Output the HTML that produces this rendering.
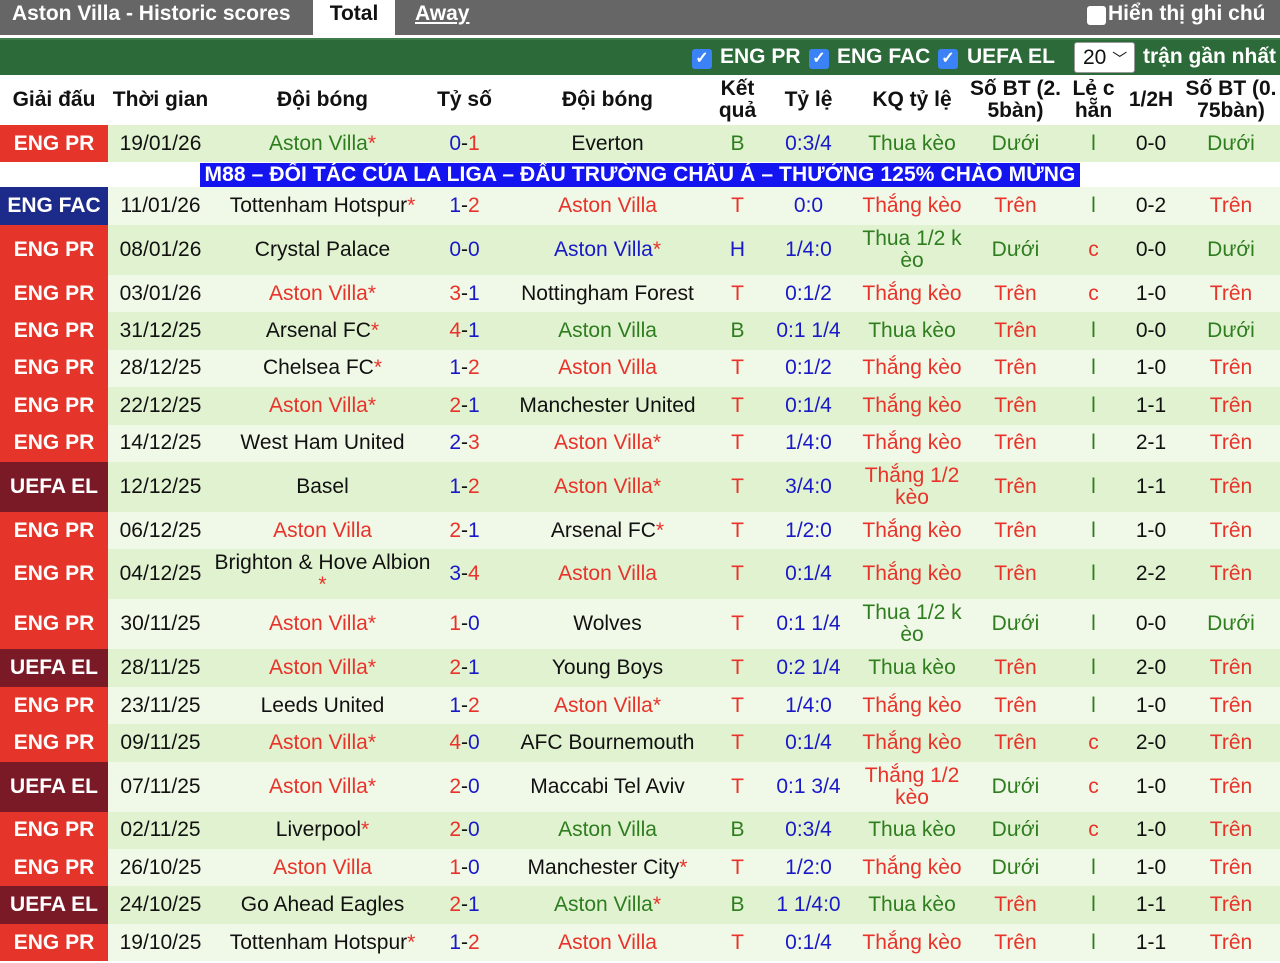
<!DOCTYPE html><html><head><meta charset="utf-8"><style>
*{margin:0;padding:0;box-sizing:border-box}
body{width:1280px;height:963px;overflow:hidden;background:#fff;font-family:"Liberation Sans",Arial,sans-serif;font-size:21px;color:#111;position:relative}
.top{position:absolute;left:0;top:0;width:1280px;height:35px;background:#666}
.top .t{position:absolute;top:2px;color:#fff;font-weight:bold;font-size:21px}
.tab{position:absolute;left:313px;top:0;width:82px;height:36px;background:#fff;color:#111;font-weight:bold;text-align:center;line-height:28px;font-size:21px}
.cb{position:absolute;width:19px;height:19px;border-radius:3px}
.bar{position:absolute;left:0;top:38px;width:1280px;height:37px;background:#2d6a3a;border-top:2px solid #3d7d49}
.bar span{position:absolute;top:5px;color:#fff;font-weight:bold;font-size:21px}
.bar .c{position:absolute;top:9px;width:20px;height:20px;background:#3b82f6;border-radius:3px;color:#fff;font-size:16px;line-height:20px;text-align:center;font-weight:bold}
.sel{position:absolute;left:1074px;top:42px;width:61px;height:31px;background:#fff;border:1px solid #999;border-radius:3px;font-size:21px;color:#111;padding-left:8px;line-height:29px}
table{position:absolute;left:0;top:75px;width:1280px;border-collapse:collapse;table-layout:fixed}
td,th{text-align:center;padding:0;line-height:22px;overflow:hidden;white-space:nowrap}
th{height:50px;font-weight:bold;font-size:21px}
tr.d td{background:#e1f2d0}tr.l td{background:#f0f8e7}
td{height:37.43px}
tr.tl td{height:50px}
td.L{color:#fff;font-weight:bold;font-size:21px}
.pr{background:#e5352a!important}.fa{background:#1c2b8a!important}.ue{background:#7b1a27!important}
.g{color:#2e7d1f}.r{color:#e8322a}.b{color:#1919c8}
tr.ad td{height:25px;background:#fff;line-height:0;font-size:0;text-align:left}
.adt{display:block;margin-left:200px;height:24px;background:#1414f0;color:#fff;font-weight:bold;font-size:21px;letter-spacing:0.1px;line-height:24px;width:880px;white-space:nowrap;overflow:hidden;text-align:center}
</style></head><body>
<div class="top"><div class="t" style="left:12px">Aston Villa - Historic scores</div>
<div class="tab">Total</div>
<div class="t" style="left:415px;text-decoration:underline">Away</div>
<div class="cb" style="left:1087px;top:6px;background:#fff"></div>
<div class="t" style="left:1108px">Hiển thị ghi chú</div></div>
<div class="bar">
<div class="c" style="left:692px">✓</div><span style="left:720px">ENG PR</span>
<div class="c" style="left:809px">✓</div><span style="left:837px">ENG FAC</span>
<div class="c" style="left:938px">✓</div><span style="left:967px">UEFA EL</span>
<span style="left:1143px">trận gần nhất</span></div>
<div class="sel">20 <span style="font-size:15px">﹀</span></div>
<table>
<colgroup><col style="width:108px"><col style="width:105px"><col style="width:219px"><col style="width:65px"><col style="width:221px"><col style="width:39px"><col style="width:103px"><col style="width:104px"><col style="width:103px"><col style="width:53px"><col style="width:62px"><col style="width:98px"></colgroup>
<tr><th>Giải đấu</th><th>Thời gian</th><th>Đội bóng</th><th>Tỷ số</th><th>Đội bóng</th><th>Kết<br>quả</th><th>Tỷ lệ</th><th>KQ tỷ lệ</th><th>Số BT (2.<br>5bàn)</th><th>Lẻ c<br>hẵn</th><th>1/2H</th><th>Số BT (0.<br>75bàn)</th></tr>
<tr class="d"><td class="L pr">ENG PR</td><td>19/01/26</td><td class="g">Aston Villa<span class="r">*</span></td><td><span class="b">0</span>-<span class="r">1</span></td><td>Everton</td><td class="g">B</td><td class="b">0:3/4</td><td class="g">Thua kèo</td><td class="g">Dưới</td><td class="g">l</td><td>0-0</td><td class="g">Dưới</td></tr>
<tr class="ad"><td colspan="12"><span class="adt">M88 – ĐỐI TÁC CỦA LA LIGA – ĐẤU TRƯỜNG CHÂU Á – THƯỞNG 125% CHÀO MỪNG</span></td></tr>
<tr class="l"><td class="L fa">ENG FAC</td><td>11/01/26</td><td>Tottenham Hotspur<span class="r">*</span></td><td><span class="b">1</span>-<span class="r">2</span></td><td class="r">Aston Villa</td><td class="r">T</td><td class="b">0:0</td><td class="r">Thắng kèo</td><td class="r">Trên</td><td class="g">l</td><td>0-2</td><td class="r">Trên</td></tr>
<tr class="d tl"><td class="L pr">ENG PR</td><td>08/01/26</td><td>Crystal Palace</td><td><span class="b">0</span>-<span class="b">0</span></td><td class="b">Aston Villa<span class="r">*</span></td><td class="b">H</td><td class="b">1/4:0</td><td class="g">Thua 1/2 k<br>èo</td><td class="g">Dưới</td><td class="r">c</td><td>0-0</td><td class="g">Dưới</td></tr>
<tr class="l"><td class="L pr">ENG PR</td><td>03/01/26</td><td class="r">Aston Villa*</td><td><span class="r">3</span>-<span class="b">1</span></td><td>Nottingham Forest</td><td class="r">T</td><td class="b">0:1/2</td><td class="r">Thắng kèo</td><td class="r">Trên</td><td class="r">c</td><td>1-0</td><td class="r">Trên</td></tr>
<tr class="d"><td class="L pr">ENG PR</td><td>31/12/25</td><td>Arsenal FC<span class="r">*</span></td><td><span class="r">4</span>-<span class="b">1</span></td><td class="g">Aston Villa</td><td class="g">B</td><td class="b">0:1 1/4</td><td class="g">Thua kèo</td><td class="r">Trên</td><td class="g">l</td><td>0-0</td><td class="g">Dưới</td></tr>
<tr class="l"><td class="L pr">ENG PR</td><td>28/12/25</td><td>Chelsea FC<span class="r">*</span></td><td><span class="b">1</span>-<span class="r">2</span></td><td class="r">Aston Villa</td><td class="r">T</td><td class="b">0:1/2</td><td class="r">Thắng kèo</td><td class="r">Trên</td><td class="g">l</td><td>1-0</td><td class="r">Trên</td></tr>
<tr class="d"><td class="L pr">ENG PR</td><td>22/12/25</td><td class="r">Aston Villa*</td><td><span class="r">2</span>-<span class="b">1</span></td><td>Manchester United</td><td class="r">T</td><td class="b">0:1/4</td><td class="r">Thắng kèo</td><td class="r">Trên</td><td class="g">l</td><td>1-1</td><td class="r">Trên</td></tr>
<tr class="l"><td class="L pr">ENG PR</td><td>14/12/25</td><td>West Ham United</td><td><span class="b">2</span>-<span class="r">3</span></td><td class="r">Aston Villa*</td><td class="r">T</td><td class="b">1/4:0</td><td class="r">Thắng kèo</td><td class="r">Trên</td><td class="g">l</td><td>2-1</td><td class="r">Trên</td></tr>
<tr class="d tl"><td class="L ue">UEFA EL</td><td>12/12/25</td><td>Basel</td><td><span class="b">1</span>-<span class="r">2</span></td><td class="r">Aston Villa*</td><td class="r">T</td><td class="b">3/4:0</td><td class="r">Thắng 1/2<br>kèo</td><td class="r">Trên</td><td class="g">l</td><td>1-1</td><td class="r">Trên</td></tr>
<tr class="l"><td class="L pr">ENG PR</td><td>06/12/25</td><td class="r">Aston Villa</td><td><span class="r">2</span>-<span class="b">1</span></td><td>Arsenal FC<span class="r">*</span></td><td class="r">T</td><td class="b">1/2:0</td><td class="r">Thắng kèo</td><td class="r">Trên</td><td class="g">l</td><td>1-0</td><td class="r">Trên</td></tr>
<tr class="d tl"><td class="L pr">ENG PR</td><td>04/12/25</td><td>Brighton &amp; Hove Albion<br><span class="r">*</span></td><td><span class="b">3</span>-<span class="r">4</span></td><td class="r">Aston Villa</td><td class="r">T</td><td class="b">0:1/4</td><td class="r">Thắng kèo</td><td class="r">Trên</td><td class="g">l</td><td>2-2</td><td class="r">Trên</td></tr>
<tr class="l tl"><td class="L pr">ENG PR</td><td>30/11/25</td><td class="r">Aston Villa*</td><td><span class="r">1</span>-<span class="b">0</span></td><td>Wolves</td><td class="r">T</td><td class="b">0:1 1/4</td><td class="g">Thua 1/2 k<br>èo</td><td class="g">Dưới</td><td class="g">l</td><td>0-0</td><td class="g">Dưới</td></tr>
<tr class="d"><td class="L ue">UEFA EL</td><td>28/11/25</td><td class="r">Aston Villa*</td><td><span class="r">2</span>-<span class="b">1</span></td><td>Young Boys</td><td class="r">T</td><td class="b">0:2 1/4</td><td class="g">Thua kèo</td><td class="r">Trên</td><td class="g">l</td><td>2-0</td><td class="r">Trên</td></tr>
<tr class="l"><td class="L pr">ENG PR</td><td>23/11/25</td><td>Leeds United</td><td><span class="b">1</span>-<span class="r">2</span></td><td class="r">Aston Villa*</td><td class="r">T</td><td class="b">1/4:0</td><td class="r">Thắng kèo</td><td class="r">Trên</td><td class="g">l</td><td>1-0</td><td class="r">Trên</td></tr>
<tr class="d"><td class="L pr">ENG PR</td><td>09/11/25</td><td class="r">Aston Villa*</td><td><span class="r">4</span>-<span class="b">0</span></td><td>AFC Bournemouth</td><td class="r">T</td><td class="b">0:1/4</td><td class="r">Thắng kèo</td><td class="r">Trên</td><td class="r">c</td><td>2-0</td><td class="r">Trên</td></tr>
<tr class="l tl"><td class="L ue">UEFA EL</td><td>07/11/25</td><td class="r">Aston Villa*</td><td><span class="r">2</span>-<span class="b">0</span></td><td>Maccabi Tel Aviv</td><td class="r">T</td><td class="b">0:1 3/4</td><td class="r">Thắng 1/2<br>kèo</td><td class="g">Dưới</td><td class="r">c</td><td>1-0</td><td class="r">Trên</td></tr>
<tr class="d"><td class="L pr">ENG PR</td><td>02/11/25</td><td>Liverpool<span class="r">*</span></td><td><span class="r">2</span>-<span class="b">0</span></td><td class="g">Aston Villa</td><td class="g">B</td><td class="b">0:3/4</td><td class="g">Thua kèo</td><td class="g">Dưới</td><td class="r">c</td><td>1-0</td><td class="r">Trên</td></tr>
<tr class="l"><td class="L pr">ENG PR</td><td>26/10/25</td><td class="r">Aston Villa</td><td><span class="r">1</span>-<span class="b">0</span></td><td>Manchester City<span class="r">*</span></td><td class="r">T</td><td class="b">1/2:0</td><td class="r">Thắng kèo</td><td class="g">Dưới</td><td class="g">l</td><td>1-0</td><td class="r">Trên</td></tr>
<tr class="d"><td class="L ue">UEFA EL</td><td>24/10/25</td><td>Go Ahead Eagles</td><td><span class="r">2</span>-<span class="b">1</span></td><td class="g">Aston Villa<span class="r">*</span></td><td class="g">B</td><td class="b">1 1/4:0</td><td class="g">Thua kèo</td><td class="r">Trên</td><td class="g">l</td><td>1-1</td><td class="r">Trên</td></tr>
<tr class="l"><td class="L pr">ENG PR</td><td>19/10/25</td><td>Tottenham Hotspur<span class="r">*</span></td><td><span class="b">1</span>-<span class="r">2</span></td><td class="r">Aston Villa</td><td class="r">T</td><td class="b">0:1/4</td><td class="r">Thắng kèo</td><td class="r">Trên</td><td class="g">l</td><td>1-1</td><td class="r">Trên</td></tr>
</table>
</body></html>
